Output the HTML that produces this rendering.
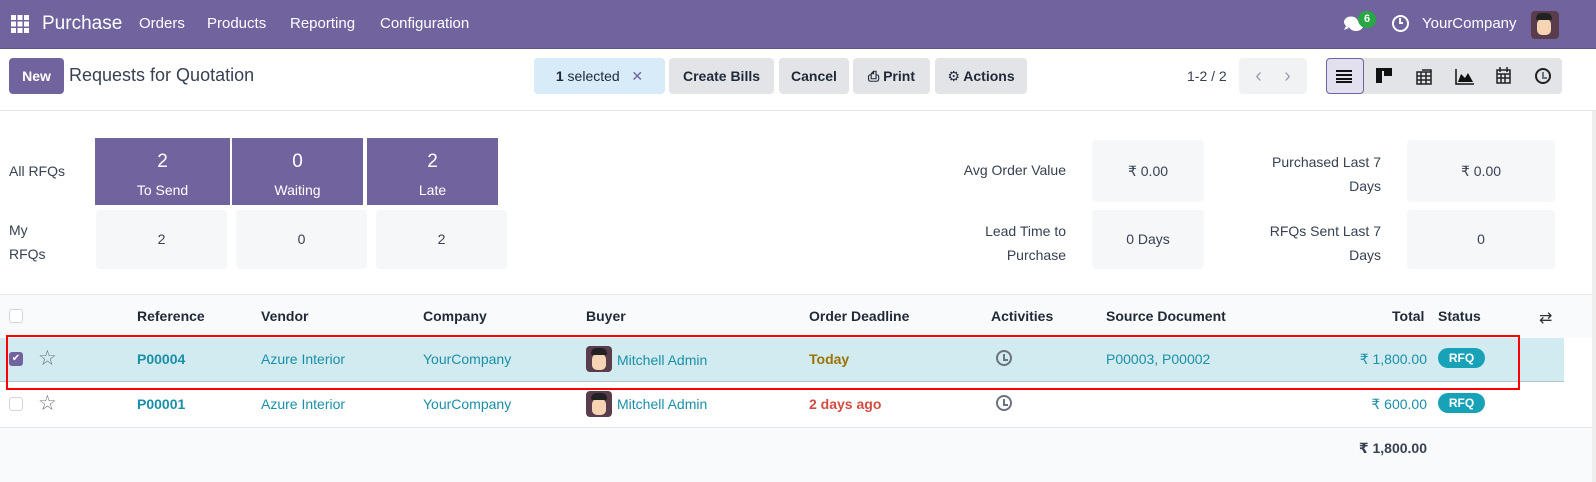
<!DOCTYPE html>
<html><head><meta charset="utf-8"><style>
*{box-sizing:border-box;margin:0;padding:0}
body{width:1596px;height:482px;overflow:hidden;background:#fff;font-family:"Liberation Sans","DejaVu Sans",sans-serif;font-size:14px;color:#374151;position:relative}
.a{position:absolute}
.nav{left:0;top:0;width:1596px;height:49px;background:#71639e;border-bottom:1px solid #5e5286;color:#fff}
.nav span{position:absolute;top:15px;font-size:15px}
.btn{position:absolute;top:58px;height:36px;border-radius:4px;background:#e3e4e8;color:#1f2937;font-weight:bold;font-size:14px;line-height:36px;text-align:center}
.pb{background:#71639e;color:#fff;font-size:19px;text-align:center;line-height:24px}
.gb{background:#f6f7f9;text-align:center;border-radius:4px;color:#374151}
.th{position:absolute;top:308px;font-weight:bold;color:#1f2937}
.l{color:#1a8fa8}
.rfq{position:absolute;width:47px;height:20px;border-radius:10px;background:#17a2b8;color:#fff;font-weight:bold;font-size:12px;text-align:center;line-height:20px}
.av{position:absolute;width:26px;height:26px;border-radius:4px;background:#5a3d4d;overflow:hidden}
.av:before{content:"";position:absolute;left:6px;top:8px;width:14px;height:16px;background:#f5d3b3;border-radius:5px}
.av:after{content:"";position:absolute;left:5px;top:2px;width:16px;height:7px;background:#222;border-radius:6px 6px 2px 2px}
.ck{position:absolute;width:14px;height:14px;border:1px solid #d1d5db;border-radius:3px;background:#fff}
.clk{position:absolute;width:16px;height:16px;border:2px solid #6b7280;border-radius:50%}
.clk:after{content:"";position:absolute;left:5px;top:2px;width:3px;height:5px;border-left:2px solid #6b7280;border-bottom:2px solid #6b7280}
</style></head><body>
<div class="a nav">
 <svg class="a" style="left:11px;top:15px" width="18" height="18" viewBox="0 0 18 18" fill="#fff"><rect x="0" y="0" width="5" height="5"/><rect x="6.5" y="0" width="5" height="5"/><rect x="13" y="0" width="5" height="5"/><rect x="0" y="6.5" width="5" height="5"/><rect x="6.5" y="6.5" width="5" height="5"/><rect x="13" y="6.5" width="5" height="5"/><rect x="0" y="13" width="5" height="5"/><rect x="6.5" y="13" width="5" height="5"/><rect x="13" y="13" width="5" height="5"/></svg>
 <span style="left:42px;top:13px;font-size:19px">Purchase</span>
 <span style="left:139px">Orders</span><span style="left:207px">Products</span><span style="left:290px">Reporting</span><span style="left:380px">Configuration</span>
 <svg class="a" style="left:1343px;top:15px" width="22" height="18" viewBox="0 0 22 18" fill="#fff"><ellipse cx="8" cy="7" rx="7" ry="5.5"/><ellipse cx="13" cy="11" rx="7" ry="5"/><path d="M3 11l-2 4 5-2z"/></svg>
 <div class="a" style="left:1358px;top:11px;width:18px;height:17px;border-radius:9px;background:#28a745;font-size:11px;font-weight:bold;text-align:center;line-height:17px">6</div>
 <div class="a" style="left:1392px;top:15px;width:17px;height:17px;border:2px solid #fff;border-radius:50%"></div>
 <div class="a" style="left:1399px;top:18px;width:4px;height:6px;border-left:2px solid #fff;border-bottom:2px solid #fff"></div>
 <span style="left:1422px">YourCompany</span>
 <div class="av" style="left:1531px;top:11px;width:28px;height:28px"></div>
</div>
<div class="a" style="left:0;top:50px;width:1596px;height:61px;border-bottom:1px solid #e5e7eb"></div>
<div class="btn" style="left:9px;width:55px;background:#71639e;color:#fff">New</div>
<div class="a" style="left:69px;top:65px;font-size:18px;color:#374151">Requests for Quotation</div>
<div class="btn" style="left:534px;width:131px;background:#d7ebf8;font-weight:normal"><b>1</b> selected &nbsp;&nbsp;<span style="color:#71639e;font-weight:bold">✕</span></div>
<div class="btn" style="left:669px;width:105px">Create Bills</div>
<div class="btn" style="left:779px;width:70px">Cancel</div>
<div class="btn" style="left:853px;width:77px">⎙ Print</div>
<div class="btn" style="left:935px;width:92px">⚙ Actions</div>
<div class="a" style="left:1187px;top:68px;font-size:14px">1-2 / 2</div>
<div class="btn" style="left:1239px;width:68px;background:#f1f2f4;font-weight:normal;color:#9ca3af;font-size:20px">‹ &nbsp;&nbsp; ›</div>
<div class="btn" style="left:1326px;width:236px;background:#e3e4e8"></div>
<div class="btn" style="left:1326px;width:38px;background:#e2dfef;border:1px solid #71639e"></div>
<svg class="a" style="left:1336px;top:69px" width="18" height="14"><rect y="1" width="16" height="2" fill="#111"/><rect y="5" width="16" height="2" fill="#111"/><rect y="9" width="16" height="2" fill="#111"/><rect y="12" width="16" height="2" fill="#111"/></svg>
<svg class="a" style="left:1376px;top:68px" width="18" height="16"><rect width="16" height="3" fill="#111"/><rect width="6" height="15" fill="#111"/><rect x="8" width="8" height="8" fill="#111"/></svg>
<svg class="a" style="left:1416px;top:69px" width="18" height="16" fill="none" stroke="#222" stroke-width="1.5"><rect x="1" y="3" width="14" height="12"/><path d="M1 7h14M1 11h14M5 3v12M10 3v12M6 1h9v2"/></svg>
<svg class="a" style="left:1455px;top:69px" width="20" height="16"><path d="M1 0v15h18" stroke="#111" stroke-width="1.5" fill="none"/><path d="M3 13l3-8 4 4 3-5 5 9z" fill="#111"/></svg>
<svg class="a" style="left:1496px;top:67px" width="16" height="18" fill="none" stroke="#222" stroke-width="1.5"><rect x="1" y="3" width="13" height="13"/><path d="M1 7h13M4 0v5M11 0v5M1 11h13M5 7v9M9 7v9"/></svg>
<div class="clk" style="left:1535px;top:68px;border-color:#222"></div>
<div class="a" style="left:9px;top:163px">All RFQs</div>
<div class="a" style="left:9px;top:218px;line-height:24px">My<br>RFQs</div>
<div class="a pb" style="left:95px;top:138px;width:135px;height:67px;padding-top:12px">2<div style="font-size:14px;line-height:32px">To Send</div></div>
<div class="a pb" style="left:232px;top:138px;width:131px;height:67px;padding-top:12px">0<div style="font-size:14px;line-height:32px">Waiting</div></div>
<div class="a pb" style="left:367px;top:138px;width:131px;height:67px;padding-top:12px">2<div style="font-size:14px;line-height:32px">Late</div></div>
<div class="a gb" style="left:96px;top:210px;width:131px;height:59px;line-height:59px">2</div>
<div class="a gb" style="left:236px;top:210px;width:131px;height:59px;line-height:59px">0</div>
<div class="a gb" style="left:376px;top:210px;width:131px;height:59px;line-height:59px">2</div>
<div class="a" style="left:940px;top:162px;width:126px;text-align:right">Avg Order Value</div>
<div class="a" style="left:940px;top:219px;width:126px;text-align:right;line-height:24px">Lead Time to<br>Purchase</div>
<div class="a gb" style="left:1092px;top:140px;width:112px;height:62px;line-height:62px">₹ 0.00</div>
<div class="a gb" style="left:1092px;top:210px;width:112px;height:59px;line-height:59px">0 Days</div>
<div class="a" style="left:1230px;top:150px;width:151px;text-align:right;line-height:24px">Purchased Last 7<br>Days</div>
<div class="a" style="left:1230px;top:219px;width:151px;text-align:right;line-height:24px">RFQs Sent Last 7<br>Days</div>
<div class="a gb" style="left:1407px;top:140px;width:148px;height:62px;line-height:62px">₹ 0.00</div>
<div class="a gb" style="left:1407px;top:210px;width:148px;height:59px;line-height:59px">0</div>
<div class="a" style="left:0;top:294px;width:1596px;height:44px;background:#f9fafb;border-top:1px solid #e5e7eb"></div>
<div class="a" style="left:0;top:338px;width:1564px;height:44px;background:#d1ebf0;border-bottom:1px solid #b8c4c8"></div>
<div class="a" style="left:0;top:427px;width:1596px;height:55px;background:#f9fafb;border-top:1px solid #e5e7eb"></div>
<div class="a" style="left:1592px;top:111px;width:4px;height:371px;background:#eee"></div>
<div class="ck" style="left:9px;top:309px"></div>
<div class="th" style="left:137px">Reference</div><div class="th" style="left:261px">Vendor</div><div class="th" style="left:423px">Company</div><div class="th" style="left:586px">Buyer</div><div class="th" style="left:809px">Order Deadline</div><div class="th" style="left:991px">Activities</div><div class="th" style="left:1106px">Source Document</div><div class="th" style="left:1392px">Total</div><div class="th" style="left:1438px">Status</div>
<div class="a" style="left:1539px;top:308px;font-size:16px;color:#333">⇄</div>
<div class="ck" style="left:9px;top:352px;background:#71639e;border-color:#71639e;color:#fff;font-size:10px;line-height:12px;text-align:center">✔</div>
<div class="a" style="left:38px;top:346px;font-size:21px;color:#6b7280">☆</div>
<div class="a l" style="left:137px;top:351px;font-weight:bold">P00004</div>
<div class="a l" style="left:261px;top:351px">Azure Interior</div>
<div class="a l" style="left:423px;top:351px">YourCompany</div>
<div class="av" style="left:586px;top:346px"></div>
<div class="a l" style="left:617px;top:352px">Mitchell Admin</div>
<div class="a" style="left:809px;top:351px;font-weight:bold;color:#9a7300">Today</div>
<div class="clk" style="left:996px;top:350px"></div>
<div class="a l" style="left:1106px;top:351px">P00003, P00002</div>
<div class="a l" style="left:1300px;top:351px;width:127px;text-align:right">₹ 1,800.00</div>
<div class="rfq" style="left:1438px;top:348px">RFQ</div>
<div class="ck" style="left:9px;top:397px"></div>
<div class="a" style="left:38px;top:391px;font-size:21px;color:#6b7280">☆</div>
<div class="a l" style="left:137px;top:396px;font-weight:bold">P00001</div>
<div class="a l" style="left:261px;top:396px">Azure Interior</div>
<div class="a l" style="left:423px;top:396px">YourCompany</div>
<div class="av" style="left:586px;top:391px"></div>
<div class="a l" style="left:617px;top:396px">Mitchell Admin</div>
<div class="a" style="left:809px;top:396px;font-weight:bold;color:#d44c43">2 days ago</div>
<div class="clk" style="left:996px;top:395px"></div>
<div class="a l" style="left:1300px;top:396px;width:127px;text-align:right">₹ 600.00</div>
<div class="rfq" style="left:1438px;top:393px">RFQ</div>
<div class="a" style="left:1300px;top:440px;width:127px;text-align:right;font-weight:bold;color:#374151">₹ 1,800.00</div>
<div class="a" style="left:6px;top:335px;width:1514px;height:55px;border:2px solid #f00"></div>
</body></html>
